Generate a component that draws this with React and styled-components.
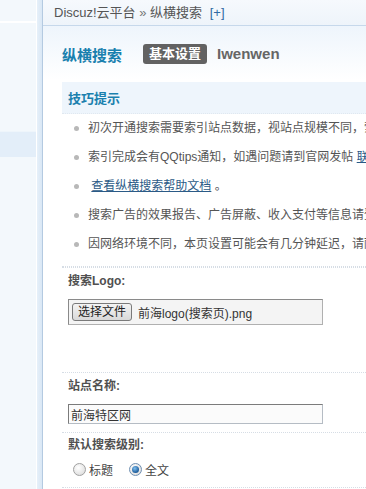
import React from 'react'
import styled, { createGlobalStyle } from 'styled-components'

const GlobalStyle = createGlobalStyle`
    html, body {
        margin: 0;
        padding: 0;
        overflow: hidden;
        background: #fff;
    }
    body {
        font-family: "Liberation Sans", "Noto Sans CJK SC", sans-serif;
        font-size: 12px;
        color: #555;
    }
`

const tips = [
    { text: '初次开通搜索需要索引站点数据，视站点规模不同，索引时间会有所差异' },
    { text: '索引完成会有QQtips通知，如遇问题请到官网发帖 ', link: '联系我们' },
    { lead: '\u00a0', link: '查看纵横搜索帮助文档', text: ' 。', linkFirst: true },
    { text: '搜索广告的效果报告、广告屏蔽、收入支付等信息请登录云平台查看' },
    { text: '因网络环境不同，本页设置可能会有几分钟延迟，请耐心等待' },
]

function App() {
    return (
        <>
            <GlobalStyle />
            <Page>
                <Sidebar>
                    <SideBlock $h={21} />
                    <SideLine />
                    <SideBlock $h={108} />
                    <SideBand />
                </Sidebar>
                <Rail />
                <Main>
                    <Crumbs>
                        Discuz!云平台 <Raquo>»</Raquo> 纵横搜索 <Plus>[+]</Plus>
                    </Crumbs>
                    <Content>
                        <TitleRow>
                            <Title>纵横搜索</Title>
                            <Tab $active>基本设置</Tab>
                            <Tab>Iwenwen</Tab>
                        </TitleRow>

                        <Tips>
                            <TipsHead>技巧提示</TipsHead>
                            <TipList>
                                {tips.map((t, i) => (
                                    <Tip key={i}>
                                        {t.linkFirst ? (
                                            <>
                                                {t.lead}
                                                <TipLink>{t.link}</TipLink>
                                                {t.text}
                                            </>
                                        ) : (
                                            <>
                                                {t.text}
                                                {t.link && <TipLink>{t.link}</TipLink>}
                                            </>
                                        )}
                                    </Tip>
                                ))}
                            </TipList>
                        </Tips>

                        <Label $h={26}>搜索Logo:</Label>
                        <Field $pt={5} $pb={47}>
                            <FileBox>
                                <FileButton>选择文件</FileButton>
                                <FileName>前海logo(搜索页).png</FileName>
                            </FileBox>
                        </Field>

                        <Label $h={26}>站点名称:</Label>
                        <Field $pt={5} $pb={8}>
                            <TextInput defaultValue="前海特区网" />
                        </Field>

                        <Label $h={24}>默认搜索级别:</Label>
                        <Field $pt={2} $pb={8}>
                            <Radios>
                                <RadioItem>
                                    <Radio />
                                    标题
                                </RadioItem>
                                <RadioItem>
                                    <Radio $checked />
                                    全文
                                </RadioItem>
                            </Radios>
                        </Field>
                        <Label $h={24} />
                    </Content>
                </Main>
            </Page>
        </>
    )
}

export default App

const Page = styled.div`
    display: flex;
    height: 489px;
    width: 366px;
    overflow: hidden;
`

const Sidebar = styled.div`
    width: 36px;
    flex-shrink: 0;
    background: #f3f8fc;
    border-right: 1px solid #fff;
    display: flex;
    flex-direction: column;
`

const SideBlock = styled.div`
    height: ${p => p.$h}px;
`

const SideLine = styled.div`
    height: 2px;
    background: #fff;
`

const SideBand = styled.div`
    height: 25px;
    background: #e3eef9;
    border-top: 1px solid #eef5fb;
`

const Rail = styled.div`
    width: 5px;
    flex-shrink: 0;
    background: linear-gradient(to right, #e6f0f9, #d9e7f5);
    border-right: 1px solid #b4cae1;
`

const Main = styled.div`
    flex: 1;
    min-width: 0;
    display: flex;
    flex-direction: column;
    background: linear-gradient(to bottom, #eef5fc 26px, #fff 80px);
`

const Crumbs = styled.div`
    height: 25px;
    line-height: 25px;
    padding-left: 11px;
    border-bottom: 1px solid #c6d8eb;
    background: linear-gradient(to bottom, #f6f9fd, #eef4fa);
    color: #555;
    font-size: 13px;
    white-space: nowrap;
`

const Raquo = styled.span`
    color: #777;
`

const Plus = styled.span`
    color: #2f6aa3;
    margin-left: 4px;
`

const Content = styled.div`
    padding: 18px 0 0 19px;
    width: 600px;
`

const TitleRow = styled.div`
    display: flex;
    align-items: center;
    height: 20px;
`

const Title = styled.h1`
    margin: 0 21px 0 0;
    font-size: 15px;
    font-weight: bold;
    color: #1a80ae;
`

const Tab = styled.span`
    height: 20px;
    line-height: 20px;
    padding: 0 6px;
    margin-right: 4px;
    border-radius: 3px;
    font-size: ${p => (p.$active ? 13 : 15)}px;
    font-weight: bold;
    color: ${p => (p.$active ? '#fff' : '#666')};
    background: ${p => (p.$active ? '#626262' : 'transparent')};
`

const Tips = styled.div`
    margin-top: 18px;
    border-bottom: 1px dotted #d6dde5;
`

const TipsHead = styled.div`
    height: 31px;
    line-height: 34px;
    padding-left: 6px;
    background: #eef5fc;
    border-bottom: 1px dotted #e0e8f0;
    font-weight: bold;
    font-size: 13px;
    color: #1a80ae;
`

const TipList = styled.ul`
    list-style: none;
    margin: 0;
    padding: 0 0 7px 0;
`

const Tip = styled.li`
    position: relative;
    height: 29px;
    line-height: 29px;
    padding-left: 26px;
    white-space: nowrap;
    color: #555;

    &::before {
        content: '';
        position: absolute;
        left: 12px;
        top: 12px;
        width: 5px;
        height: 5px;
        border-radius: 50%;
        background: #b8b8b8;
    }
`

const TipLink = styled.a`
    color: #2b5a86;
    text-decoration: underline;
`

const Label = styled.div`
    height: ${p => p.$h}px;
    line-height: ${p => p.$h}px;
    padding-left: 6px;
    font-weight: bold;
    color: #505050;
    border-top: 1px dotted #d6dde5;
`

const Field = styled.div`
    padding: ${p => p.$pt}px 0 ${p => p.$pb}px 6px;
`

const FileBox = styled.div`
    display: flex;
    align-items: center;
    width: 253px;
    height: 24px;
    border: 1px solid #b0b0b0;
    border-top-color: #8a8a8a;
    border-left-color: #8a8a8a;
    background: #f4f4f4;
`

const FileButton = styled.span`
    display: inline-block;
    height: 16px;
    line-height: 16px;
    margin-left: 3px;
    padding: 0 5px;
    border: 1px solid #7a7a7a;
    border-radius: 3px;
    background: linear-gradient(to bottom, #f4f4f4, #d9d9d9);
    color: #222;
    font-size: 12px;
`

const FileName = styled.span`
    margin-left: 6px;
    color: #333;
    font-size: 12px;
`

const TextInput = styled.input`
    box-sizing: border-box;
    width: 255px;
    height: 20px;
    padding: 0 2px;
    border: 1px solid #b5bcc4;
    border-top-color: #7b7b7b;
    border-left-color: #7b7b7b;
    background: #fbfbfb;
    font-family: "Liberation Sans", "Noto Sans CJK SC", sans-serif;
    font-size: 12px;
    color: #333;
    outline: none;
`

const Radios = styled.div`
    display: flex;
    align-items: center;
    gap: 16px;
    height: 20px;
    padding-left: 5px;
`

const RadioItem = styled.label`
    display: flex;
    align-items: center;
    gap: 3px;
    color: #444;
`

const Radio = styled.span`
    position: relative;
    box-sizing: border-box;
    width: 13px;
    height: 13px;
    border-radius: 50%;
    border: 1px solid ${p => (p.$checked ? '#6f8fb2' : '#a0a0a0')};
    background: radial-gradient(circle at 40% 35%, #ffffff, #d6d6d6);

    &::after {
        content: '';
        display: ${p => (p.$checked ? 'block' : 'none')};
        position: absolute;
        left: 2px;
        top: 2px;
        width: 7px;
        height: 7px;
        border-radius: 50%;
        background: radial-gradient(circle at 40% 35%, #7fc0f0, #1c5a99 70%);
    }
`
